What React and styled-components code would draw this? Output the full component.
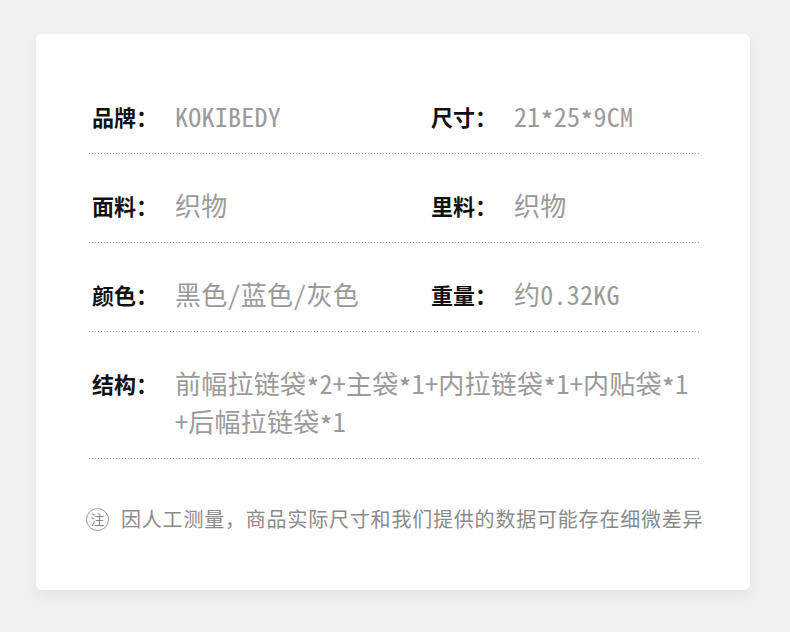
import React from "react";
import styled, { createGlobalStyle } from "styled-components";

const Global = createGlobalStyle`
  html, body { margin: 0; padding: 0; background: #f0f0f0; }
  body { width: 790px; height: 632px; overflow: hidden; font-family: "Noto Sans CJK SC", "Noto Sans", sans-serif; }
`;

const Page = styled.div`
  padding: 34px 40px 0 36px;
`;

const Card = styled.div`
  width: 714px;
  height: 556px;
  box-sizing: border-box;
  background: #fff;
  border-radius: 6px;
  box-shadow: 0 6px 12px rgba(0, 0, 0, 0.05);
  padding: 31px 50px 0 53px;
`;

const Row = styled.div`
  display: grid;
  grid-template-columns: 339px 1fr;
  padding: 32px 0 18px 3px;
  background-image: linear-gradient(to right, #a8a8a8 1px, transparent 1px);
  background-size: 3px 1px;
  background-repeat: repeat-x;
  background-position: left bottom;
  border-bottom: 1px solid transparent;
  background-origin: border-box;
`;

const Field = styled.div`
  display: flex;
  align-items: flex-start;
  grid-column: ${(p) => (p.$wide ? "1 / span 2" : "auto")};
`;

const Label = styled.div`
  flex: 0 0 83px;
  font-family: "Noto Sans CJK SC", sans-serif;
  font-weight: 700;
  font-size: 22px;
  line-height: 38px;
  color: #111;
  white-space: nowrap;
`;

const Value = styled.div`
  font-family: "Noto Sans Mono CJK SC", "Noto Sans CJK SC", monospace;
  font-size: 26px;
  letter-spacing: 0.25px;
  line-height: 38px;
  color: #9a9a9a;
  white-space: nowrap;
`;

const Star = styled.span`
  display: inline-block;
  font-size: 22px;
  font-weight: 700;
  line-height: 1;
  padding: 0 1px;
  transform: translateY(1px);
`;

const Note = styled.div`
  display: flex;
  align-items: center;
  gap: 12px;
  margin: 48px 0 0 -3px;
`;

const NoteIcon = styled.span`
  flex: 0 0 auto;
  width: 21px;
  height: 21px;
  border: 1.5px solid #9a9a9a;
  border-radius: 50%;
  display: inline-flex;
  align-items: center;
  justify-content: center;
  font-size: 14px;
  line-height: 1;
  color: #888;
  font-family: "Noto Sans CJK SC", sans-serif;
`;

const NoteText = styled.span`
  font-family: "Noto Sans CJK SC", sans-serif;
  font-size: 20px;
  letter-spacing: 0.8px;
  color: #8a8a8a;
  line-height: 24px;
  white-space: nowrap;
`;

const withStars = (text) =>
  text.split("*").flatMap((part, i) =>
    i === 0 ? [part] : [<Star key={i}>*</Star>, part]
  );

const rows = [
  [
    ["品牌：", "KOKIBEDY"],
    ["尺寸：", "21*25*9CM"],
  ],
  [
    ["面料：", "织物"],
    ["里料：", "织物"],
  ],
  [
    ["颜色：", "黑色/蓝色/灰色"],
    ["重量：", "约0.32KG"],
  ],
];

export default function App() {
  return (
    <>
      <Global />
      <Page>
        <Card>
          {rows.map((r, i) => (
            <Row key={i}>
              {r.map(([l, v]) => (
                <Field key={l}>
                  <Label>{l}</Label>
                  <Value>{withStars(v)}</Value>
                </Field>
              ))}
            </Row>
          ))}
          <Row>
            <Field $wide>
              <Label>结构：</Label>
              <Value>
                {withStars("前幅拉链袋*2+主袋*1+内拉链袋*1+内贴袋*1")}
                <br />
                {withStars("+后幅拉链袋*1")}
              </Value>
            </Field>
          </Row>
          <Note>
            <NoteIcon>注</NoteIcon>
            <NoteText>因人工测量，商品实际尺寸和我们提供的数据可能存在细微差异</NoteText>
          </Note>
        </Card>
      </Page>
    </>
  );
}
